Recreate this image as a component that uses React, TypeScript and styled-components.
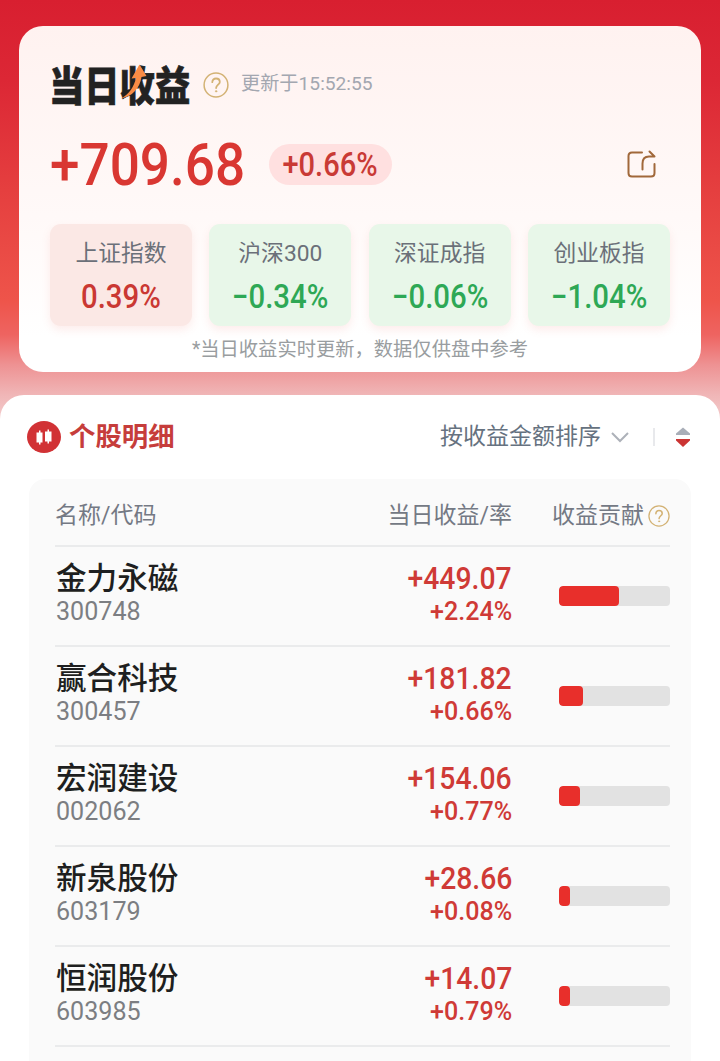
import React from "react";
import styled, { createGlobalStyle } from "styled-components";

const GlobalStyle = createGlobalStyle`
  * { box-sizing: border-box; }
  html, body { margin: 0; padding: 0; }
  body {
    width: 720px;
    height: 1061px;
    overflow: hidden;
    font-family: Roboto, "Noto Sans CJK SC", sans-serif;
    background: #fff;
  }
`;

const Page = styled.main`
  width: 720px;
  height: 1061px;
  overflow: hidden;
  display: flex;
  flex-direction: column;
  background: linear-gradient(
    180deg,
    #d81f30 0px,
    #dc2735 80px,
    #e53f3f 190px,
    #ee544a 300px,
    #ee6461 335px,
    #ee9293 365px,
    #f0b6b7 395px,
    #f3cccc 420px
  );
`;

const SummaryCard = styled.section`
  height: 346px;
  margin: 26px 19px 23px;
  padding: 36px 31px 0;
  border-radius: 24px;
  background: linear-gradient(180deg, #fff2f0 0%, #fff9f8 55%, #ffffff 90%);
  flex: none;
`;

const TitleRow = styled.header`
  display: flex;
  align-items: center;
  height: 46px;
`;

const Title = styled.h1`
  position: relative;
  width: 140px;
  height: 46px;
  margin: 0 13px 0 0;
`;

const TitleText = styled.span`
  display: block;
  font: 900 35.3px/46px "Noto Sans CJK SC", sans-serif;
  color: #222;
  white-space: nowrap;
  -webkit-text-stroke: 0.6px #222;
  transform: translate(-1px, -2px) scaleY(1.17);
`;

const TitleArrow = styled.svg`
  position: absolute;
  left: 69px;
  top: 2px;
`;

const Updated = styled.span`
  margin-left: 12px;
  font-size: 19.2px;
  line-height: 28px;
  color: #a3a7b0;
  transform: translateY(-1px);
`;

const TotalRow = styled.div`
  display: flex;
  align-items: center;
  height: 62px;
  margin-top: 25px;
  margin-bottom: 29px;
  padding-right: 13px;
`;

const Digits = styled.span<{
  $size: number;
  $scale: number;
  $origin?: string;
  $weight?: number;
}>`
  display: block;
  font-family: Roboto, sans-serif;
  font-size: ${(p) => p.$size}px;
  font-weight: ${(p) => p.$weight ?? 500};
  line-height: 1;
  white-space: nowrap;
  transform: scaleX(${(p) => p.$scale});
  transform-origin: ${(p) => p.$origin ?? "left"} center;
`;

const Total = styled.div`
  width: 219px;
  padding-top: 1px;
  color: #d93732;
`;

const RateBadge = styled.div`
  width: 123px;
  height: 41px;
  border-radius: 21px;
  background: #ffe0e0;
  color: #c93a35;
  display: flex;
  align-items: center;
  justify-content: center;
`;

const ShareIcon = styled.svg`
  margin: 2px 0 0 auto;
`;

const IndexGrid = styled.div`
  display: grid;
  grid-template-columns: repeat(4, 142px);
  justify-content: space-between;
`;

const IndexTile = styled.div<{ $up?: boolean }>`
  height: 102px;
  padding-top: 13px;
  border-radius: 11px;
  background: ${(p) => (p.$up ? "#fbe8e5" : "#e8f7e9")};
  color: ${(p) => (p.$up ? "#ca3833" : "#2ea855")};
  box-shadow: 0 4px 9px rgba(240, 130, 120, 0.14);
  display: flex;
  flex-direction: column;
  align-items: center;
`;

const IndexName = styled.div`
  font-size: 22.8px;
  line-height: 34px;
  margin-bottom: 9px;
  color: #6b7079;
`;

const Footnote = styled.p`
  margin: 10px 0 0;
  font-size: 19.3px;
  line-height: 28px;
  text-align: center;
  color: #999da0;
`;

const Detail = styled.section`
  flex: 1;
  padding: 20px 29px 0;
  border-radius: 24px 24px 0 0;
  background: #fff;
`;

const DetailHeader = styled.header`
  display: flex;
  align-items: center;
  height: 44px;
  margin: 0 1px 20px -2px;
`;

const DetailTitle = styled.h2`
  margin: 0 auto 0 8px;
  font-size: 26.4px;
  font-weight: 700;
  line-height: 40px;
  color: #c63d3b;
`;

const SortLabel = styled.span`
  font-size: 23px;
  line-height: 34px;
  color: #667280;
`;

const Chevron = styled.svg`
  margin-left: 9px;
`;

const Divider = styled.i`
  width: 2px;
  height: 18px;
  margin: 0 21px 0 23px;
  background: #e8e9ec;
`;

const Table = styled.div`
  height: 600px;
  padding: 0 21px 0 26px;
  border-radius: 16px;
  background: #fafafa;
`;

const rowGrid = `
  display: grid;
  grid-template-columns: 1fr 180px 158px;
  border-bottom: 2px solid #eaebec;
`;

const TableHead = styled.div`
  ${rowGrid}
  height: 68px;
  padding-top: 7px;
  align-items: center;
  font-size: 23px;
  line-height: 34px;
  color: #747984;
`;

const HeadCell = styled.div<{ $end?: boolean }>`
  display: flex;
  align-items: center;
  gap: 4px;
  justify-content: ${(p) => (p.$end ? "flex-end" : "flex-start")};
  white-space: nowrap;
`;

const StockRow = styled.div`
  ${rowGrid}
  height: 100px;
`;

const NameCell = styled.div`
  padding: 11px 0 0 1px;
  color: #7c7e82;
`;

const StockName = styled.div`
  height: 40px;
  font-size: 30.6px;
  font-weight: 500;
  line-height: 42px;
  color: #1e1f20;
`;

const GainCell = styled.div`
  display: flex;
  flex-direction: column;
  align-items: flex-end;
  gap: 4px;
  padding-top: 15px;
  color: #cf3a36;
`;

const BarCell = styled.div`
  padding: 39px 0 0 47px;
`;

const Track = styled.div`
  height: 20px;
  border-radius: 4px;
  background: #e2e2e2;
  overflow: hidden;
`;

const Fill = styled.div`
  height: 100%;
  border-radius: 4px;
  background: #e82f2b;
`;

function HelpIcon({ size }: { size: number }) {
  return (
    <svg width={size} height={size} viewBox="0 0 26 26" fill="none" stroke="#d3b274" strokeWidth="1.5" strokeLinecap="round">
      <circle cx="13" cy="13" r="11.9" />
      <path d="M9.3 10.2C9.3 7.9 10.9 6.5 13 6.5s3.8 1.4 3.8 3.4c0 2.6-3.7 3-3.7 6.2" strokeWidth="1.8" />
      <circle cx="13.1" cy="19.3" r="0.7" fill="#d3b274" strokeWidth="0.8" />
    </svg>
  );
}

const indices = [
  { name: "上证指数", value: "0.39%", up: true },
  { name: "沪深300", value: "−0.34%" },
  { name: "深证成指", value: "−0.06%" },
  { name: "创业板指", value: "−1.04%" },
];

const stocks = [
  { name: "金力永磁", code: "300748", gain: "+449.07", rate: "+2.24%", share: 60 },
  { name: "赢合科技", code: "300457", gain: "+181.82", rate: "+0.66%", share: 24 },
  { name: "宏润建设", code: "002062", gain: "+154.06", rate: "+0.77%", share: 21 },
  { name: "新泉股份", code: "603179", gain: "+28.66", rate: "+0.08%", share: 11 },
  { name: "恒润股份", code: "603985", gain: "+14.07", rate: "+0.79%", share: 11 },
];

export default function App() {
  return (
    <>
      <GlobalStyle />
      <Page>
        <SummaryCard>
          <TitleRow>
            <Title>
              <TitleText>当日收益</TitleText>
              <TitleArrow width="32" height="42" viewBox="0 0 32 42">
                <path d="M2 34.500C10 30 15 23 17 14L12.500 14.500 20.500 0.500 27.500 12 22.500 13C21 24 13 33 2 34.500Z" fill="#f98b45" />
              </TitleArrow>
            </Title>
            <HelpIcon size={26} />
            <Updated>更新于15:52:55</Updated>
          </TitleRow>
          <TotalRow>
            <Total>
              <Digits $size={60} $scale={0.885}>+709.68</Digits>
            </Total>
            <RateBadge>
              <Digits $size={33} $scale={0.88} $origin="center">+0.66%</Digits>
            </RateBadge>
            <ShareIcon width="30" height="30" viewBox="0 0 30 30" fill="none" stroke="#a1683a" strokeWidth="2" strokeLinecap="round" strokeLinejoin="round">
              <path d="M15 2.500H5Q1.500 2.500 1.500 6V23Q1.500 26.500 5 26.500H24Q27.500 26.500 27.500 23V14" />
              <path d="M15.500 19.500V13.500Q15.500 6.500 22 6.500H27.500L22.500 1.500" />
            </ShareIcon>
          </TotalRow>
          <IndexGrid>
            {indices.map((item) => (
              <IndexTile key={item.name} $up={item.up}>
                <IndexName>{item.name}</IndexName>
                <Digits $size={33} $scale={0.89} $origin="center">{item.value}</Digits>
              </IndexTile>
            ))}
          </IndexGrid>
          <Footnote>*当日收益实时更新，数据仅供盘中参考</Footnote>
        </SummaryCard>

        <Detail>
          <DetailHeader>
            <svg width="34" height="32" viewBox="0 0 34 32">
              <ellipse cx="17" cy="16" rx="17" ry="16" fill="#d13235" />
              <path d="M9.500 11.500h2.500v-2h1.500v2H15.500v10h-2v2h-1.500v-2H9.500ZM18 10.500h2.500V8.500H22v2h2.500v10h-2.500v2h-1.500v-2H18Z" fill="#fff" />
            </svg>
            <DetailTitle>个股明细</DetailTitle>
            <SortLabel>按收益金额排序</SortLabel>
            <Chevron width="20" height="12" viewBox="0 0 20 12" fill="none" stroke="#adb1b9" strokeWidth="2">
              <path d="M2 2l8 8 8-8" />
            </Chevron>
            <Divider />
            <svg width="14" height="20" viewBox="0 0 14 20">
              <path d="M7 0.500L14 6.500V8H0V6.500Z" fill="#a9aeb8" />
              <path d="M0 12H14V13.500L7 20L0 13.500Z" fill="#cb3433" />
            </svg>
          </DetailHeader>
          <Table>
            <TableHead>
              <HeadCell>名称/代码</HeadCell>
              <HeadCell $end>当日收益/率</HeadCell>
              <HeadCell $end>
                收益贡献
                <HelpIcon size={22} />
              </HeadCell>
            </TableHead>
            {stocks.map((s) => (
              <StockRow key={s.code}>
                <NameCell>
                  <StockName>{s.name}</StockName>
                  <Digits $size={26} $scale={0.965} $weight={400}>{s.code}</Digits>
                </NameCell>
                <GainCell>
                  <Digits $size={32} $scale={0.885} $origin="right">{s.gain}</Digits>
                  <Digits $size={26} $scale={0.965} $origin="right">{s.rate}</Digits>
                </GainCell>
                <BarCell>
                  <Track>
                    <Fill style={{ width: s.share }} />
                  </Track>
                </BarCell>
              </StockRow>
            ))}
          </Table>
        </Detail>
      </Page>
    </>
  );
}
